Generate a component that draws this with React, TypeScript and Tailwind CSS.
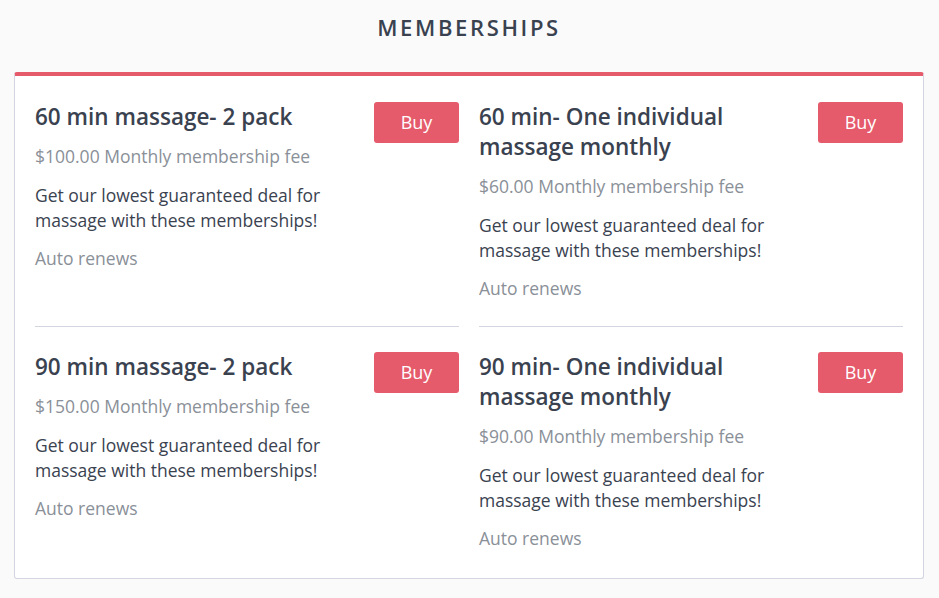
import React from 'react';

type Plan = {
  name: string;
  fee: string;
};

const plans: Plan[] = [
  { name: '60 min massage- 2 pack', fee: '$100.00' },
  { name: '60 min- One individual massage monthly', fee: '$60.00' },
  { name: '90 min massage- 2 pack', fee: '$150.00' },
  { name: '90 min- One individual massage monthly', fee: '$90.00' },
];

function PlanItem({ plan, last }: { plan: Plan; last: boolean }) {
  return (
    <div
      className={`flex items-start justify-between gap-4 pb-[26px] ${
        last ? 'pt-[25px]' : 'pt-[26px] border-b border-[#d3d5e0]'
      }`}
    >
      <div className="max-w-[310px]">
        <h3 className="text-[22.5px] leading-[30px] font-semibold text-[#3a4250]">
          {plan.name}
        </h3>
        <p className="mt-3 text-[17.5px] leading-6 text-[#8a9098]">
          {plan.fee} Monthly membership fee
        </p>
        <p className="mt-[15px] text-[17.5px] leading-[25px] text-[#3a4250]">
          Get our lowest guaranteed deal for massage with these memberships!
        </p>
        <p className="mt-[13px] text-[17.5px] leading-6 text-[#8a9098]">
          Auto renews
        </p>
      </div>
      <button className="h-[41px] w-[85px] shrink-0 rounded-[3px] bg-[#e55b6b] text-[18px] text-white">
        Buy
      </button>
    </div>
  );
}

export default function App() {
  return (
    <div
      className="min-h-[598px] bg-[#fafafa] pl-[14px] pr-[15px] pt-[11px] pb-5"
      style={{ fontFamily: '"Open Sans", "Noto Sans", sans-serif' }}
    >
      <h1 className="text-center text-[22px] leading-8 font-semibold tracking-[0.12em] text-[#3a4250]">
        MEMBERSHIPS
      </h1>
      <div className="mt-[29px] rounded-[3px] border border-[#d3d5e0] border-t-4 border-t-[#e55b6b] bg-white px-5 pb-[2px]">
        <div className="grid grid-cols-2 gap-x-5">
          {plans.map((plan, i) => (
            <PlanItem key={plan.name} plan={plan} last={i >= 2} />
          ))}
        </div>
      </div>
    </div>
  );
}
